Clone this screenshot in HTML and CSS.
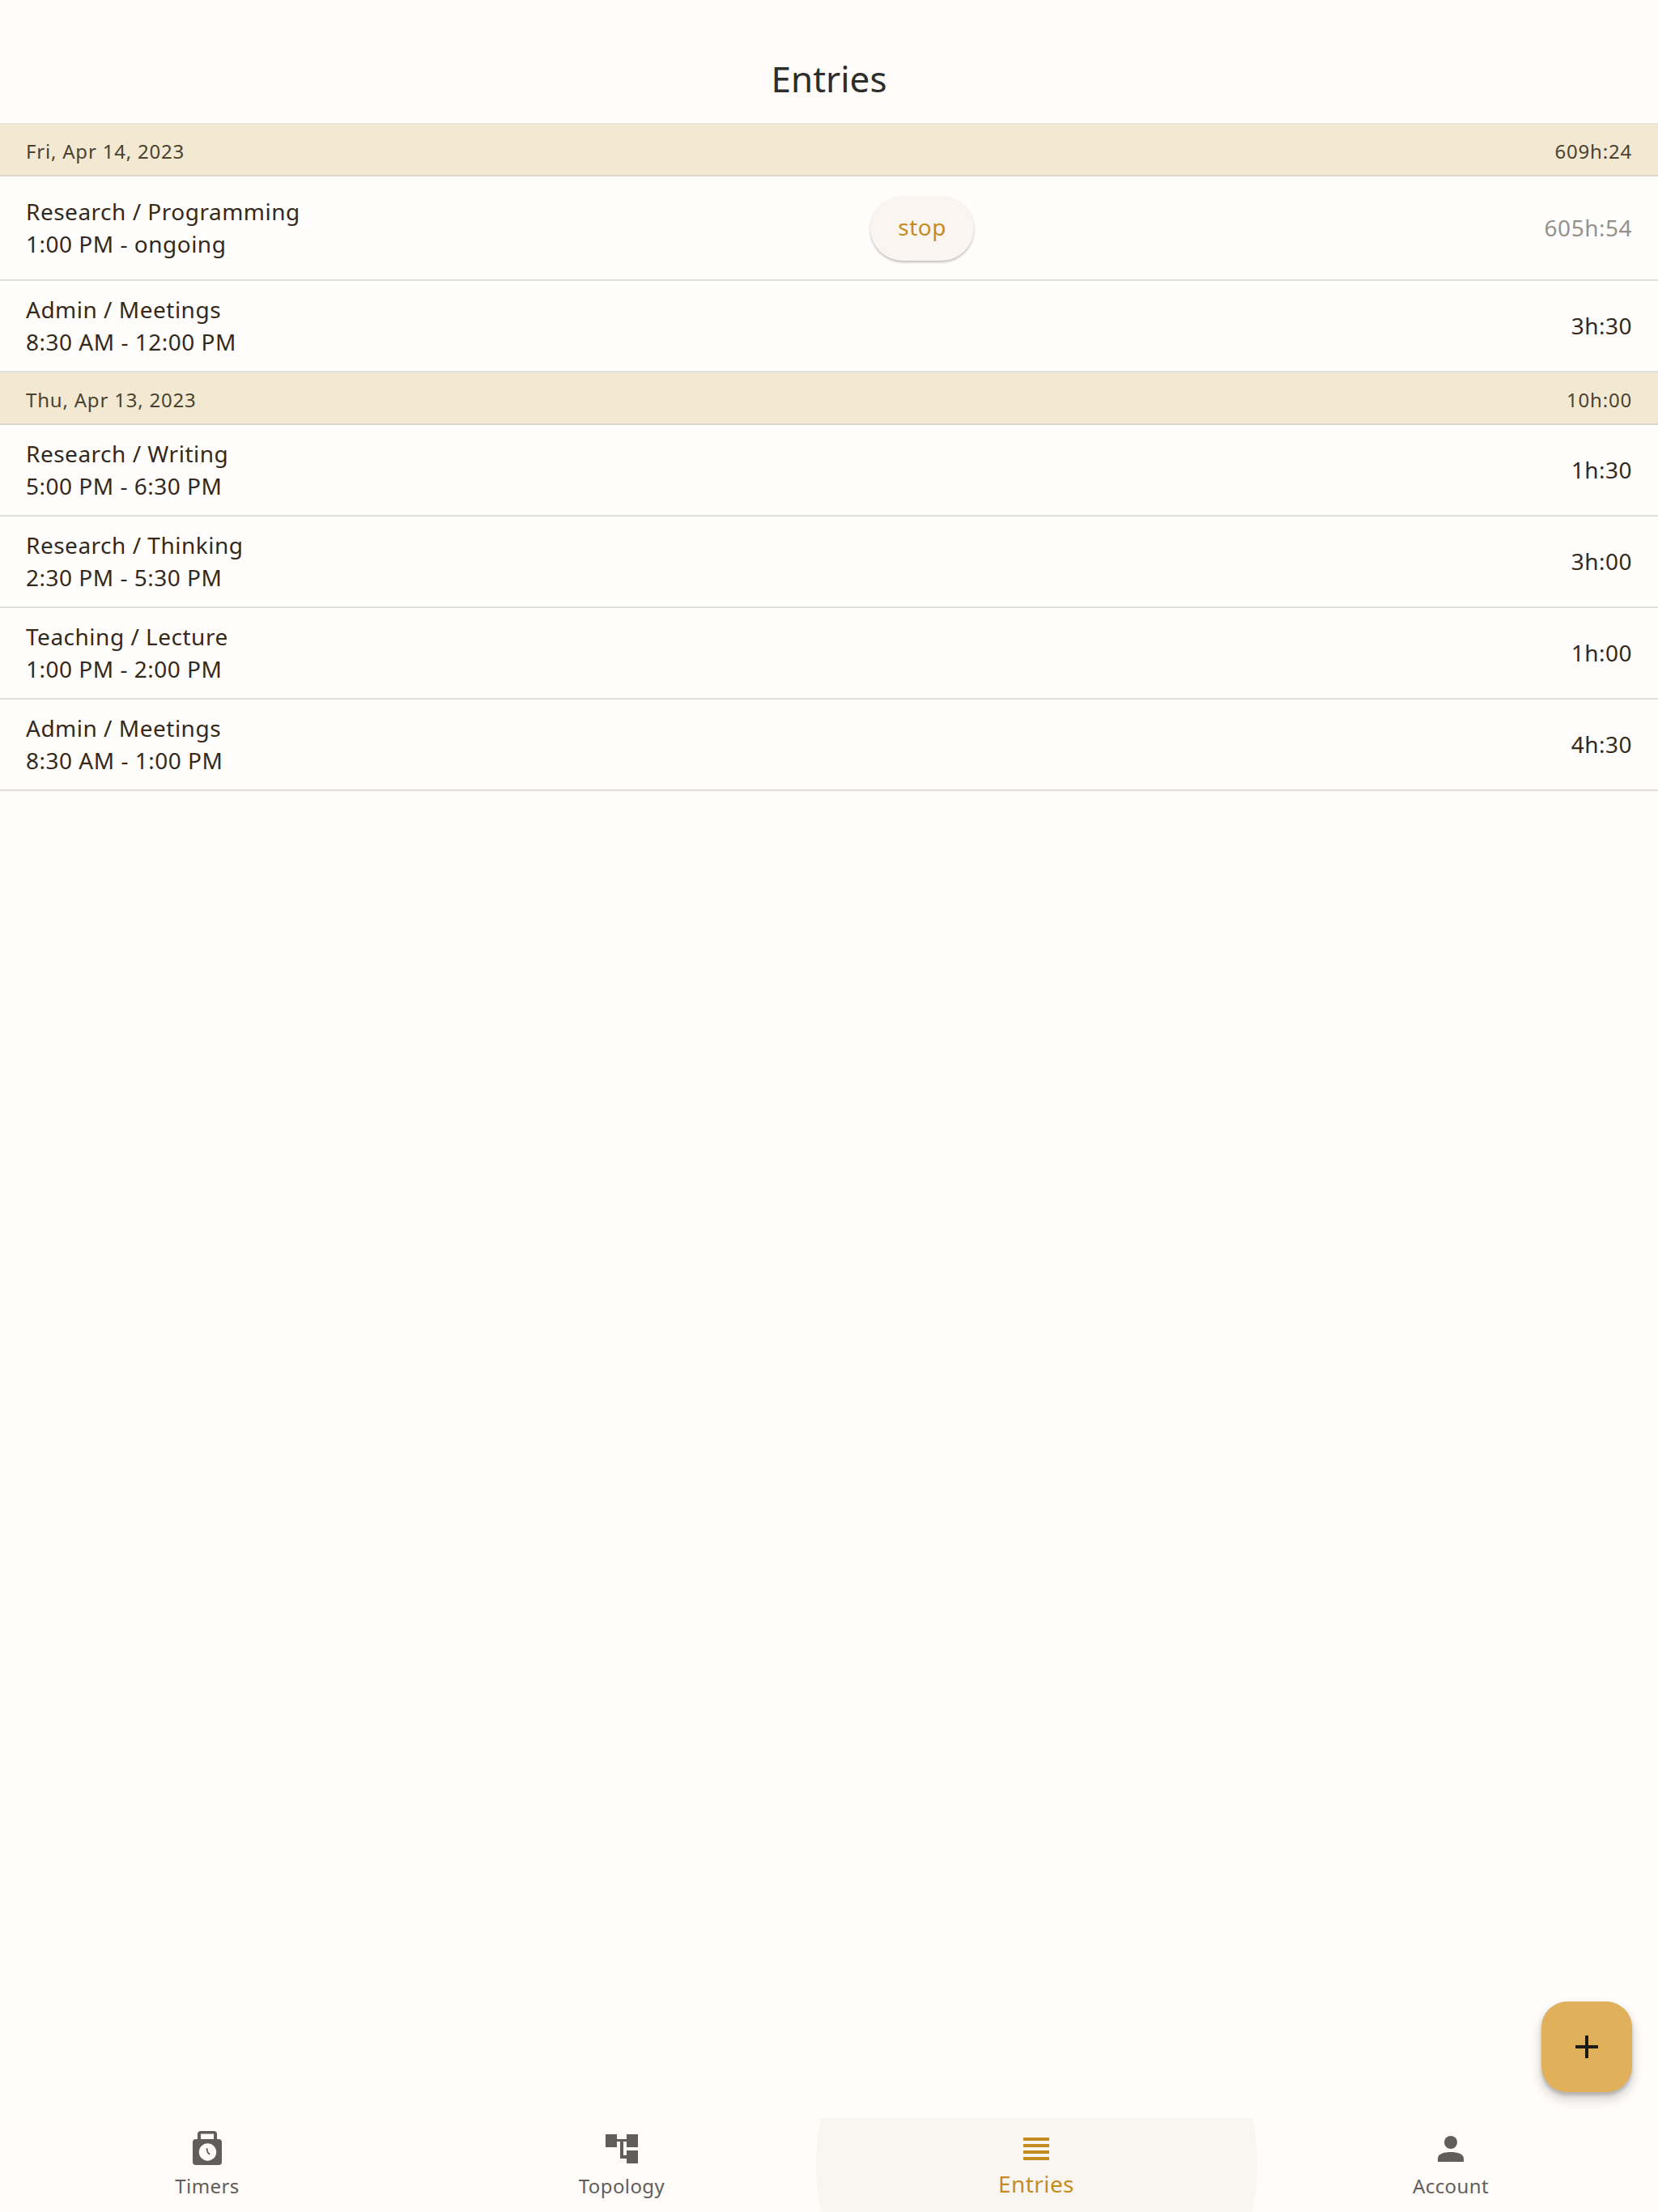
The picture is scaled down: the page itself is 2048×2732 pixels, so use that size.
FILE: index.html
```html
<!DOCTYPE html>
<html>
	<head>
		<title>Entries</title>
		<link rel="stylesheet" href="styles.css">
	</head>
	<body>
		<div class="page">
			<div class="title-bar">Entries</div>
			<div class="list">
				<div class="day"><span>Fri, Apr 14, 2023</span><span>609h:24</span></div>
				<div class="entry running">
					<div class="entry-text"><div>Research / Programming</div><div>1:00 PM - ongoing</div></div>
					<button class="stop">stop</button>
					<div class="duration">605h:54</div>
				</div>
				<div class="entry">
					<div class="entry-text"><div>Admin / Meetings</div><div>8:30 AM - 12:00 PM</div></div>
					<div class="duration">3h:30</div>
				</div>
				<div class="day"><span>Thu, Apr 13, 2023</span><span>10h:00</span></div>
				<div class="entry">
					<div class="entry-text"><div>Research / Writing</div><div>5:00 PM - 6:30 PM</div></div>
					<div class="duration">1h:30</div>
				</div>
				<div class="entry">
					<div class="entry-text"><div>Research / Thinking</div><div>2:30 PM - 5:30 PM</div></div>
					<div class="duration">3h:00</div>
				</div>
				<div class="entry">
					<div class="entry-text"><div>Teaching / Lecture</div><div>1:00 PM - 2:00 PM</div></div>
					<div class="duration">1h:00</div>
				</div>
				<div class="entry">
					<div class="entry-text"><div>Admin / Meetings</div><div>8:30 AM - 1:00 PM</div></div>
					<div class="duration">4h:30</div>
				</div>
			</div>
			<button class="fab" aria-label="Add">
				<svg width="28" height="28" viewBox="0 0 28 28"><path d="M12 0h4v12h12v4H16v12h-4V16H0v-4h12z" fill="#1d1a12"/></svg>
			</button>
			<div class="nav">
				<div class="tab">
					<svg class="tab-icon" width="40" height="48" viewBox="0 0 40 48"><path fill-rule="evenodd" d="M12 0h16q4 0 4 4v6h2q4 0 4 4v24q0 4-4 4H6q-4 0-4-4V14q0-4 4-4h2V4q0-4 4-4zm0 3.5V10h16V3.5z" fill="#5f5e5c"/><circle cx="20.5" cy="26" r="10.7" fill="#fffbf8"/><path d="M19.3 21.3l1.4 5.4 2.6 2" fill="none" stroke="#5f5e5c" stroke-width="1.8"/></svg>
					<span>Timers</span>
				</div>
				<div class="tab">
					<svg class="tab-icon" width="40" height="48" viewBox="0 0 40 48"><path d="M0 4h14v6h12V4h14v16H26v-7h-4v17h4v-6h14v16H26v-6h-8V13h-4v7H0z" fill="#5f5e5c"/></svg>
					<span>Topology</span>
				</div>
				<div class="tab active">
					<svg class="tab-icon" width="40" height="48" viewBox="0 0 40 48"><path d="M4 8h32v4H4zM4 16h32v4H4zM4 24h32v4H4zM4 32h32v4H4z" fill="#c68c1f"/></svg>
					<span>Entries</span>
				</div>
				<div class="tab">
					<svg class="tab-icon" width="40" height="48" viewBox="0 0 40 48"><circle cx="20" cy="14" r="8" fill="#5f5e5c"/><path d="M4 38v-4c0-6 8-8 16-8s16 2 16 8v4z" fill="#5f5e5c"/></svg>
					<span>Account</span>
				</div>
			</div>
		</div>
	</body>
</html>
```
FILE: styles.css
```css
* {
	box-sizing: border-box;
}

body {
	margin: 0;
	background-color: #fffefd;
	font-family: "Noto Sans", sans-serif;
	color: #34291a;
}

.page {
	position: relative;
	display: flex;
	flex-direction: column;
	height: 2732px;
	overflow: hidden;
}

.title-bar {
	height: 153px;
	padding-top: 70px;
	background: #fffcf9;
	border-bottom: 1px solid #e6e2de;
	text-align: center;
	font-size: 44px;
	line-height: 54px;
	color: #2d2d2b;
}

.list {
	flex: 1;
}

.day {
	display: flex;
	justify-content: space-between;
	align-items: center;
	height: 65px;
	padding: 3px 32px 0;
	background: #f3e9d3;
	border-bottom: 2px solid #dcd6c8;
	font-size: 24px;
	letter-spacing: 0.8px;
	color: #4b4230;
}

.entry {
	display: flex;
	justify-content: space-between;
	align-items: center;
	padding: 15.5px 32px;
	border-bottom: 2px solid #e0e0de;
	font-size: 28px;
	line-height: 40px;
	letter-spacing: 0.5px;
}

.entry.running {
	padding-top: 23.5px;
	padding-bottom: 23.5px;
}

.entry-text,
.duration {
	margin: -1px 0 1px;
}

.duration {
	font-size: 28px;
}

.running .duration {
	color: #95918a;
}

.stop {
	width: 128px;
	height: 80px;
	padding: 0 0 3px;
	border: none;
	border-radius: 40px;
	background: #faf5f0;
	box-shadow: 0 2px 3px rgba(0, 0, 0, 0.25);
	font-family: "Noto Sans", sans-serif;
	font-size: 28px;
	letter-spacing: 0.5px;
	color: #c68c1f;
}

.fab {
	position: absolute;
	right: 32px;
	bottom: 148px;
	display: flex;
	align-items: center;
	justify-content: center;
	width: 112px;
	height: 112px;
	padding: 0;
	border: none;
	border-radius: 32px;
	background: #e0b05b;
	box-shadow: 0 8px 12px 4px rgba(0, 0, 0, 0.12), 0 4px 4px rgba(0, 0, 0, 0.2);
}

.nav {
	display: flex;
	height: 116px;
	background: #fffbf8;
	overflow: hidden;
}

.tab {
	position: relative;
	flex: 1;
	display: flex;
	flex-direction: column;
	align-items: center;
	padding-top: 16px;
	font-size: 24px;
	line-height: 32px;
	letter-spacing: 0.4px;
	color: #5f5e5c;
}

.tab-icon {
	position: relative;
	display: block;
	margin-bottom: 4px;
}

.tab span {
	position: relative;
}

.tab.active {
	font-size: 28px;
	letter-spacing: 0.4px;
	color: #c68c1f;
}

.tab.active span {
	margin-top: -3px;
}

/* ripple left on the selected tab, wider than the tab itself */
.tab.active::before {
	content: "";
	position: absolute;
	left: -16px;
	top: -215px;
	width: 545px;
	height: 545px;
	border-radius: 50%;
	background: #f9f5f1;
}
```
